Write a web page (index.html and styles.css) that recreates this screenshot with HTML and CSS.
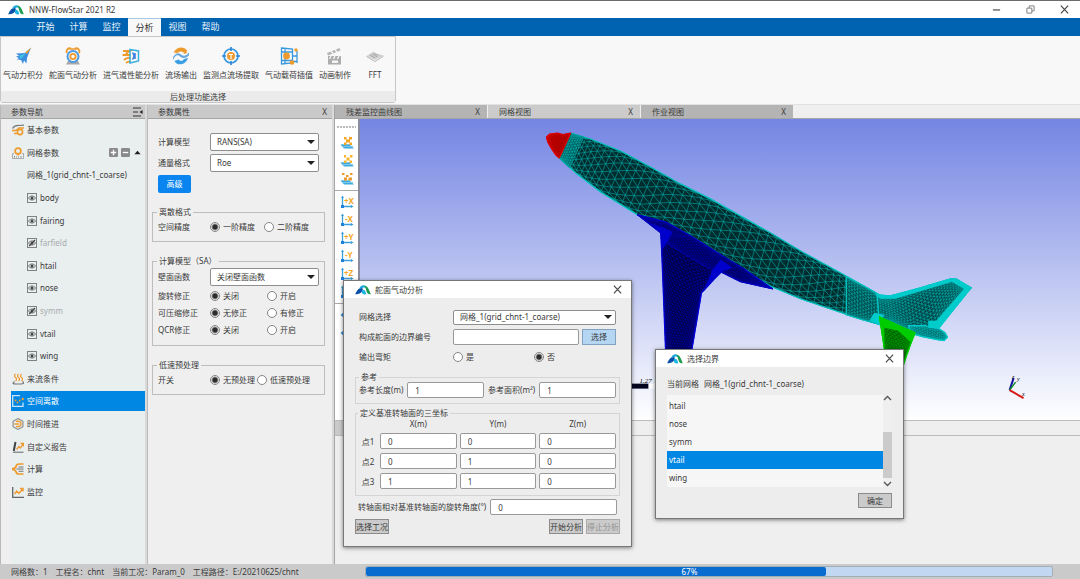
FILE: index.html
```html
<!DOCTYPE html>
<html lang="zh-CN">
<head>
<meta charset="utf-8">
<meta name="viewport" content="width=device-width, initial-scale=1">
<title>NNW-FlowStar 2021 R2</title>
<link rel="stylesheet" href="styles.css">
</head>
<body>
<svg class="defs" aria-hidden="true">
  <symbol id="logo" viewBox="0 0 16 10">
    <path d="M0.200 9.200C1.500 6 3.500 3 6.500 3c1.800 0 1.500 2 0.500 3.500C5.500 8.500 3 9.600 0.200 9.200z" fill="#0a4fa8"/>
    <path d="M4.200 3.400C5.500 1 7 0 8.700 0.200c1.500 0.300 2.300 1.800 3 3.600C10.500 2.500 9 2.300 7.500 3z" fill="#19a7e0"/>
    <path d="M7.200 5.200C8.500 4.200 10.500 5 11.300 9.300 8.600 9.800 6 8.600 7.200 5.200z" fill="#1cb5e6"/>
    <path d="M9.300 0.600C13 1 14.200 5.300 15.800 9.200c-3 0.400-3.900-1.500-4.500-3.500C10.700 3.800 10.300 2 9.300 0.600z" fill="#1c9c50"/>
  </symbol>
  <symbol id="eye" viewBox="0 0 10 10">
    <rect x="0.500" y="0.500" width="9" height="9" fill="none" stroke="#7d8283"/>
    <path d="M1.300 5Q5 0.800 8.700 5Q5 9.200 1.300 5z" fill="none" stroke="#666" stroke-width="0.900"/>
    <circle cx="5" cy="5" r="1.500" fill="#444"/>
  </symbol>
  <symbol id="eye-off" viewBox="0 0 10 10">
    <use href="#eye"/>
    <path d="M2.200 8L8 2" stroke="#444" stroke-width="1.200"/>
  </symbol>
  <symbol id="close" viewBox="0 0 10 10"><path d="M1 0.800l8 8.400M9 0.800l-8 8.400" stroke="#444" stroke-width="1.300" fill="none"/></symbol>
  <symbol id="plane-tool" viewBox="0 0 14 14">
    <path d="M0.500 8.500h9L14 12.500H4z" fill="#3fa9e0"/><path d="M1 8.500h9M3 10.500h10" stroke="#7cc8ea"/>
  </symbol>
  <symbol id="axis" viewBox="0 0 14 14">
    <path d="M2.500 12V2.500M2.500 11.500H12" stroke="#3a9fdc" stroke-width="1.300"/>
    <path d="M2.500 0.500L4 3H1zM13.500 11.500L11 13V10z" fill="#3a9fdc"/><rect x="1" y="10" width="3" height="3" fill="#1e80dd"/>
  </symbol>
</svg>

<div class="app">
  <header class="titlebar">
    <svg class="logo"><use href="#logo"/></svg>
    <h1>NNW-FlowStar 2021 R2</h1>
    <div class="win-buttons">
      <button aria-label="最小化"><svg viewBox="0 0 10 10"><path d="M1 5.500h8" stroke="#555" stroke-width="1.400"/></svg></button>
      <button aria-label="还原"><svg viewBox="0 0 10 10"><path d="M1 3.500h5.500V9H1zM3.500 3.300V1H9v5.500H6.700" fill="none" stroke="#777"/></svg></button>
      <button aria-label="关闭"><svg><use href="#close"/></svg></button>
    </div>
  </header>

  <nav class="menubar">
    <button>开始</button><button>计算</button><button>监控</button><button class="active">分析</button><button>视图</button><button>帮助</button>
  </nav>

  <section class="ribbon">
    <div class="ribbon-group">
      <div class="ribbon-items">
        <button><svg viewBox="0 0 18 18"><path d="M17 0.500L11 6 2 6.500l3 2.300-3 0.700 3 1.800-2.500 1 4.500 0.700 2 4 1-3.500 2.500 3 0.500-5.500z" fill="#3c8fe0"/><path d="M17.500 0.500L13 7l-1.800-1.500z" fill="#ee9a2d"/><path d="M5 8.800l7-2.600-5 6z" fill="#3fc0dd"/></svg>气动力积分</button>
        <button><svg viewBox="0 0 18 18"><path d="M4 14h10l2 3.500H2z" fill="#a7a7a7"/><path d="M3 6a3.200 3.200 0 0 1 4-4.500M15 6a3.200 3.200 0 0 0-4-4.500" fill="none" stroke="#ee9a2d" stroke-width="1.800"/><circle cx="9" cy="9.500" r="5.500" fill="none" stroke="#4d9be3" stroke-width="2"/><circle cx="9" cy="9.500" r="2.700" fill="none" stroke="#ee9a2d" stroke-width="1.800"/><path d="M5.500 2h7" stroke="#ee9a2d" stroke-width="1.500"/></svg>舵面气动分析</button>
        <button><svg viewBox="0 0 18 18"><path d="M1 4h7q-5 3-4 4h5M0.500 8H5M2 13q3-3 7-2M4 16q2-2 5-1" fill="none" stroke="#ee9a2d" stroke-width="1.800"/><path d="M8 2.500L16.500 4v10L8 16z" fill="none" stroke="#38b1e0" stroke-width="1.500"/><path d="M10.500 5.500q3 3.500 0 7M13 6v6" fill="none" stroke="#3b7fe0" stroke-width="1.500"/></svg>进气道性能分析</button>
        <button><svg viewBox="0 0 18 18"><path d="M1.500 5.500C5-0.500 12-1 15.500 4L12 5.800Q8 3 5.500 6z" fill="#ee9a2d"/><path d="M1 10q4-6 8-2.500t8-2v3Q12 13 8 9.500T1 13z" fill="#6aa8dc"/><path d="M16 11C14 18 5 19.500 2.500 14l4-1.500q3 3 5.500-0.500z" fill="#3b9fe4"/><path d="M13 4l2.500 2-4 1z" fill="#ee9a2d"/></svg>流场输出</button>
        <button><svg viewBox="0 0 18 18"><circle cx="9" cy="9" r="7" fill="none" stroke="#3998dd" stroke-width="1.700"/><path d="M9 0v4M9 14v4M0 9h4M14 9h4" stroke="#2f89d8" stroke-width="1.700"/><circle cx="9" cy="9" r="4" fill="#ee9a2d"/><path d="M7 7.500h4M9 7.500V12" stroke="#fff" stroke-width="1.200"/></svg>监测点流场提取</button>
        <button><svg viewBox="0 0 18 18"><path d="M1.500 1l11 1v14l-11 1zM17 4v12M12.500 9H17M12.500 14.500H17M1.500 5h11M1.500 13.500h11M5 1.500v15.500" fill="none" stroke="#3998dd" stroke-width="1.300"/><circle cx="6.500" cy="9" r="3.400" fill="#ee9a2d"/><circle cx="12" cy="15.500" r="2.300" fill="#ee9a2d"/><circle cx="16" cy="3" r="1.700" fill="#ee9a2d"/></svg>气动载荷插值</button>
        <button><svg viewBox="0 0 18 18"><path d="M2 9h13v8.500H2z" fill="#adadad"/><path d="M1 6l12.500-5 1 2.500L2 8.500z" fill="#b5b5b5"/><path d="M5 4l2 2.500M9 2.500L11 5M5 9l-1.500 3M9 9l-1.500 3M13 9l-1.500 3" stroke="#f8f8f8" stroke-width="1.300"/><path d="M6 13.500h6V16H6z" fill="#f4f4f4"/></svg>动画制作</button>
        <button class="wide"><svg viewBox="0 0 18 18"><path d="M0.500 9L7.500 4.500l1.500 1.500L17.500 8.500 9 13z" fill="#d2d2d2"/><path d="M4 8l5 3M6 6.800l5 3M8 6l4.500 2.800" stroke="#9a9a9a" stroke-width="0.800"/><path d="M0.500 9.500L9 14.500l8.500-5.500" fill="none" stroke="#b4b4b4"/></svg>FFT</button>
      </div>
      <div class="ribbon-caption">后处理功能选择</div>
    </div>
  </section>

  <main class="workspace">
    <aside class="panel nav-panel">
      <header class="panel-head">参数导航
        <button aria-label="折叠"><svg viewBox="0 0 10 10"><path d="M0 1h8M0 5h5M0 9h8" stroke="#333" stroke-width="1.100"/><path d="M9.500 3v4L6.500 5z" fill="#222"/></svg></button>
      </header>
      <ul class="nav-list">
        <li><button><svg viewBox="0 0 12 12"><path d="M0.500 4.500Q3 1 7 1.500L12 1.200" fill="none" stroke="#777" stroke-width="1.200"/><path d="M0 6.500h4L7 4h5M2 9.500h3" fill="none" stroke="#ee9a2d" stroke-width="1.400"/><circle cx="8" cy="8" r="2.600" fill="none" stroke="#ee9a2d" stroke-width="1.600"/></svg>基本参数</button></li>
        <li><button><svg viewBox="0 0 12 12"><path d="M2 6.500H0.500v5h11v-5H10" fill="none" stroke="#aaa"/><path d="M2.500 9v1.500M4.500 9.500v1M6.500 9.500v1M9 9v1.500" stroke="#888"/><circle cx="6" cy="4" r="2.900" fill="none" stroke="#ee9a2d" stroke-width="1.700"/><path d="M4.500 7l1.500 2L7.500 7" fill="#ee9a2d"/></svg>网格参数</button>
          <span class="row-tools">
            <button class="tool" aria-label="添加"><svg viewBox="0 0 10 10"><rect width="10" height="10" rx="1.500" fill="#8a8a8a"/><path d="M5 2v6M2 5h6" stroke="#fff" stroke-width="1.500"/></svg></button>
            <button class="tool" aria-label="删除"><svg viewBox="0 0 10 10"><rect width="10" height="10" rx="1.500" fill="#8a8a8a"/><path d="M2 5h6" stroke="#fff" stroke-width="1.500"/></svg></button>
            <button class="tool" aria-label="收起"><svg viewBox="0 0 10 10"><path d="M1.500 7L5 3l3.500 4z" fill="#222"/></svg></button>
          </span></li>
        <li class="sub"><button>网格_1(grid_chnt-1_coarse)</button></li>
        <li class="sub"><button><svg><use href="#eye"/></svg>body</button></li>
        <li class="sub"><button><svg><use href="#eye"/></svg>fairing</button></li>
        <li class="sub off"><button><svg><use href="#eye-off"/></svg>farfield</button></li>
        <li class="sub"><button><svg><use href="#eye"/></svg>htail</button></li>
        <li class="sub"><button><svg><use href="#eye"/></svg>nose</button></li>
        <li class="sub off"><button><svg><use href="#eye-off"/></svg>symm</button></li>
        <li class="sub"><button><svg><use href="#eye"/></svg>vtail</button></li>
        <li class="sub"><button><svg><use href="#eye"/></svg>wing</button></li>
        <li><button><svg viewBox="0 0 12 12"><path d="M3.500 1q-2 2 0 3.500t0 3.500M6.500 1q-2 2 0 3.500t0 3.500M9.500 1q-2 2 0 3.500t0 3.500" fill="none" stroke="#ee9a2d" stroke-width="1.200"/><path d="M2.500 8.500Q-1 11 4 11h5q4.500 0 1.500-2.500" fill="none" stroke="#777" stroke-width="1.200"/></svg>来流条件</button></li>
        <li class="selected"><button><svg viewBox="0 0 12 12"><path d="M11 7.500v3.800H0.700V0.700H8" fill="none" stroke="#c9e4fa" stroke-width="1.300"/><circle cx="3.500" cy="5.500" r="0.900" fill="#ee9a2d"/><circle cx="5.500" cy="7.500" r="0.900" fill="#ee9a2d"/><circle cx="7.800" cy="5.500" r="0.900" fill="#ee9a2d"/><circle cx="10.800" cy="4" r="1.200" fill="#ee9a2d"/></svg>空间离散</button></li>
        <li><button><svg viewBox="0 0 12 12"><path d="M6 0.600l4.900 2.700v5.400L6 11.400 1.100 8.700V3.300z" fill="none" stroke="#888" stroke-width="1.100"/><path d="M4 3.500Q9 2.500 9 5.800T4 8.500M2.500 6H7" fill="none" stroke="#ee9a2d" stroke-width="1.400"/></svg>时间推进</button></li>
        <li><button><svg viewBox="0 0 12 12"><path d="M3.500 1L1.800 10" stroke="#444" stroke-width="2"/><path d="M1 11.200h10.500" stroke="#666"/><path d="M4.500 8.500l2.500-3 1.500 1.500L11 3M8.500 2.500H11.500V5.500" fill="none" stroke="#ee9a2d" stroke-width="1.300"/></svg>自定义报告</button></li>
        <li><button><svg viewBox="0 0 12 12"><path d="M11.500 1H7Q4.500 1 4 3.500T0 5.500M0 6.500q3.500 0 4 2.300T7 11h4.500" fill="none" stroke="#ee9a2d" stroke-width="1.700"/><path d="M4.500 6H11.500M6.500 4h5M6.500 8.300h5" stroke="#777" stroke-width="1.100"/></svg>计算</button></li>
        <li><button><svg viewBox="0 0 12 12"><path d="M0.700 1v10.300H12" fill="none" stroke="#666" stroke-width="1.300"/><path d="M2.500 8l2.200-3 2.200 2.500L10.500 3M8 2.500h3V5.500" fill="none" stroke="#ee9a2d" stroke-width="1.400"/></svg>监控</button></li>
      </ul>
    </aside>

    <section class="panel prop-panel">
      <header class="panel-head">参数属性 <button aria-label="关闭面板">X</button></header>
      <form class="props">
        <div class="field"><label for="model">计算模型</label><span class="combo"><select id="model"><option>RANS(SA)</option></select></span></div>
        <div class="field"><label for="flux">通量格式</label><span class="combo"><select id="flux"><option>Roe</option></select></span></div>
        <button type="button" class="primary">高级</button>
        <fieldset>
          <legend>离散格式</legend>
          <div class="field"><span>空间精度</span><label class="radio"><input type="radio" name="order" checked>一阶精度</label><label class="radio"><input type="radio" name="order">二阶精度</label></div>
        </fieldset>
        <fieldset class="roomy">
          <legend>计算模型（SA）</legend>
          <div class="field"><label for="wall">壁面函数</label><span class="combo"><select id="wall"><option>关闭壁面函数</option></select></span></div>
          <div class="field"><span>旋转修正</span><label class="radio"><input type="radio" name="rot" checked>关闭</label><label class="radio"><input type="radio" name="rot">开启</label></div>
          <div class="field"><span>可压缩修正</span><label class="radio"><input type="radio" name="comp" checked>无修正</label><label class="radio"><input type="radio" name="comp">有修正</label></div>
          <div class="field"><span>QCR修正</span><label class="radio"><input type="radio" name="qcr" checked>关闭</label><label class="radio"><input type="radio" name="qcr">开启</label></div>
        </fieldset>
        <fieldset class="tight">
          <legend>低速预处理</legend>
          <div class="field"><span>开关</span><label class="radio"><input type="radio" name="pre" checked>无预处理</label><label class="radio"><input type="radio" name="pre">低速预处理</label></div>
        </fieldset>
      </form>
    </section>

    <section class="views">
      <div class="tabs">
        <div class="tab"><span>残差监控曲线图</span><button aria-label="关闭">X</button></div>
        <div class="tab active"><span>网格视图</span><button aria-label="关闭">X</button></div>
        <div class="tab"><span>作业视图</span><button aria-label="关闭">X</button></div>
      </div>
      <div class="stage">
        <div class="toolstrip">
          <span class="grip"></span>
          <button aria-label="视图一"><svg viewBox="0 0 14 14"><use href="#plane-tool"/><path d="M4 1h2.500v2.500H4zM9 1h3v2.500H9zM6 3.500h4v3H6zM4 6.500h2.500V9H4zM9.500 6.500h2.500V9H9.500z" fill="#f5a623"/></svg></button>
          <button aria-label="视图二"><svg viewBox="0 0 14 14"><use href="#plane-tool"/><path d="M4 1h2v2.500H4zM10 1h2.500v2.500H10zM6.500 3.500h3v3h-3zM4 6.500h2.500V9H4zM9.500 6.500h2.500V9H9.500z" fill="#f7b52e"/></svg></button>
          <button aria-label="视图三"><svg viewBox="0 0 14 14"><use href="#plane-tool"/><path d="M2 1h2.500v2H2zM6 3h2.500v2H6zM10 1h2.500v2H10zM4 5.500h3v3H4zM8.500 5.500H12v3H8.500z" fill="#ee9a2d"/></svg></button>
          <hr>
          <button aria-label="+X"><svg viewBox="0 0 14 14"><use href="#axis"/><text x="4" y="9">+X</text></svg></button>
          <button aria-label="-X"><svg viewBox="0 0 14 14"><use href="#axis"/><text x="5" y="9">-X</text></svg></button>
          <button aria-label="+Y"><svg viewBox="0 0 14 14"><use href="#axis"/><text x="4" y="9">+Y</text></svg></button>
          <button aria-label="-Y"><svg viewBox="0 0 14 14"><use href="#axis"/><text x="5" y="9">-Y</text></svg></button>
          <button aria-label="+Z"><svg viewBox="0 0 14 14"><use href="#axis"/><text x="4" y="9">+Z</text></svg></button>
          <button aria-label="-Z"><svg viewBox="0 0 14 14"><use href="#axis"/><text x="5" y="9">-Z</text></svg></button>
          <hr>
          <button aria-label="左转"><svg viewBox="0 0 14 14"><path d="M0.500 7L5 3v8z" fill="#3a8fdc"/><path d="M5 5q5-3 8 2" fill="none" stroke="#ee9a2d" stroke-width="2"/></svg></button>
          <button aria-label="右转"><svg viewBox="0 0 14 14"><path d="M0.500 7L5 3v8z" fill="#3a8fdc"/><path d="M5 9q5 3 8-2" fill="none" stroke="#ee9a2d" stroke-width="2"/></svg></button>
        </div>
        <div class="viewport">
          <svg id="scene" viewBox="359 119 721 301" preserveAspectRatio="xMinYMin meet" role="img" aria-label="飞机表面网格">
            <g id="aircraft"></g>
            <path d="M630 386.500h18" stroke="#050520" stroke-width="5"/>
            <path d="M648 386.500h8" stroke="#fff" stroke-width="5"/>
            <text class="scale-text" x="639" y="383">1.27</text>
            <path d="M1009.500 390.500l4-12" stroke="#1010a0" stroke-width="2"/>
            <path d="M1009.500 390.500l6-8" stroke="#109020" stroke-width="1.500"/>
            <path d="M1009.500 390.500l14 8" stroke="#d81818" stroke-width="2"/>
            <text class="axis-text" x="1012" y="379">z</text><text class="axis-text" x="1017" y="381">y</text><text class="axis-text" x="1022" y="396">x</text>
          </svg>
        </div>
      </div>
      <div class="lower-tabs"><span></span></div>
      <div class="lower"></div>
    </section>
  </main>

  <footer class="statusbar">
    <div class="status-text"><span>网格数：1</span><span>工程名：chnt</span><span>当前工况：Param_0</span><span>工程路径：E:/20210625/chnt</span></div>
    <div class="progress" role="progressbar" aria-valuenow="67" aria-valuemin="0" aria-valuemax="100"><div class="bar" style="width:67%"></div><span>67%</span></div>
  </footer>

  <div class="dialog rudder" role="dialog" aria-labelledby="d1">
    <header class="dialog-head"><svg class="logo"><use href="#logo"/></svg><h2 id="d1">舵面气动分析</h2><button aria-label="关闭"><svg><use href="#close"/></svg></button></header>
    <form class="rudder-form">
      <div class="drow"><label for="grid">网格选择</label><span class="combo"><select id="grid"><option>网格_1(grid_chnt-1_coarse)</option></select></span></div>
      <div class="drow"><label for="bnd">构成舵面的边界编号</label><input type="text" id="bnd"><button type="button" class="pick">选择</button></div>
      <div class="drow"><span class="lab">输出弯矩</span><label class="radio"><input type="radio" name="moment">是</label><label class="radio"><input type="radio" name="moment" checked>否</label></div>
      <fieldset class="ref">
        <legend>参考</legend>
        <div><label for="len">参考长度(m)</label><input type="text" id="len" value="1"><label for="area">参考面积(m²)</label><input type="text" id="area" value="1"></div>
      </fieldset>
      <fieldset class="pts">
        <legend>定义基准转轴面的三坐标</legend>
        <table>
          <tr><td></td><th>X(m)</th><th>Y(m)</th><th>Z(m)</th></tr>
          <tr><th>点1</th><td><input type="text" aria-label="点1 X" value="0"></td><td><input type="text" aria-label="点1 Y" value="0"></td><td><input type="text" aria-label="点1 Z" value="0"></td></tr>
          <tr><th>点2</th><td><input type="text" aria-label="点2 X" value="0"></td><td><input type="text" aria-label="点2 Y" value="1"></td><td><input type="text" aria-label="点2 Z" value="0"></td></tr>
          <tr><th>点3</th><td><input type="text" aria-label="点3 X" value="1"></td><td><input type="text" aria-label="点3 Y" value="1"></td><td><input type="text" aria-label="点3 Z" value="0"></td></tr>
        </table>
      </fieldset>
      <div class="angle"><label for="ang">转轴面相对基准转轴面的旋转角度(°)</label><input type="text" id="ang" value="0"></div>
      <div class="actions"><button type="button" class="btn">选择工况</button><button type="button" class="btn push">开始分析</button><button type="button" class="btn" disabled>停止分析</button></div>
    </form>
  </div>

  <div class="dialog boundary" role="dialog" aria-labelledby="d2">
    <header class="dialog-head"><svg class="logo"><use href="#logo"/></svg><h2 id="d2">选择边界</h2><button aria-label="关闭"><svg><use href="#close"/></svg></button></header>
    <div class="boundary-body">
      <p><span>当前网格</span><span>网格_1(grid_chnt-1_coarse)</span></p>
      <div class="listbox">
        <ul role="listbox" aria-label="边界"><li role="option">htail</li><li role="option">nose</li><li role="option">symm</li><li role="option" class="selected" aria-selected="true">vtail</li><li role="option">wing</li></ul>
        <div class="scroll">
          <svg viewBox="0 0 9 6"><path d="M1 5l3.500-3.500L8 5" fill="none" stroke="#555" stroke-width="1.300"/></svg>
          <div class="track"><div class="thumb"></div></div>
          <svg viewBox="0 0 9 6"><path d="M1 1l3.500 3.500L8 1" fill="none" stroke="#555" stroke-width="1.300"/></svg>
        </div>
      </div>
      <button class="btn ok">确定</button>
    </div>
  </div>
</div>
<script src="mesh.js"></script>
</body>
</html>
```
FILE: styles.css
```css
* { box-sizing: border-box; }
body {
  margin: 0;
  font: 8px/12px "Noto Sans", "Noto Sans CJK SC", sans-serif;
  color: #3a3a3a;
  background: #efefef;
}
button, input, select { font: inherit; color: inherit; margin: 0; padding: 0; }
button { border: 0; background: none; white-space: nowrap; }
h1, h2, p, ul { margin: 0; padding: 0; font: inherit; list-style: none; }
svg { display: block; flex: none; }
.defs { position: absolute; width: 0; height: 0; }

.app { position: relative; display: flex; flex-direction: column; height: 100vh; overflow: hidden; }

/* Title bar and menu */
.titlebar { display: flex; align-items: center; height: 18px; padding: 0 6px 0 8px; background: #fff; border-top: 1px solid #6b6b6b; }
.logo { width: 16px; height: 10px; }
.titlebar h1 { margin-left: 5px; }
.win-buttons { display: flex; margin-left: auto; gap: 14px; }
.win-buttons button { width: 20px; display: flex; justify-content: center; }
.win-buttons svg { width: 9px; height: 9px; }
.menubar { display: flex; height: 18px; padding-left: 29px; background: #0063b1; font-size: 9px; }
.menubar button { width: 33px; color: #e8f2fb; }
.menubar .active { background: #f8f8f8; color: #333; border-top: 1px solid #a9c9e6; }

/* Ribbon */
.ribbon { height: 69px; background: #f8f8f8; border-bottom: 1px solid #e2e2e2; flex: none; }
.ribbon-group { display: flex; flex-direction: column; width: 396px; height: 67px; border: 1px solid #c6c6c6; border-radius: 0 0 3px 3px; }
.ribbon-items { display: flex; flex: 1; gap: 6px; padding: 10px 2px 0; }
.ribbon-items button { display: flex; flex-direction: column; align-items: center; gap: 4px; height: 35px; }
.ribbon-items .wide { width: 36px; }
.ribbon-items svg { width: 18px; height: 18px; }
.ribbon-caption { height: 11px; line-height: 11px; text-align: center; background: #ebebeb; }

/* Workspace */
.workspace { display: flex; flex: 1; min-height: 0; background: #dadada; gap: 2px; }
.panel { display: flex; flex-direction: column; background: #efefef; border-left: 1px solid #b9b9b9; }
.nav-panel { width: 145px; }
.prop-panel { width: 185px; }
.panel-head { display: flex; flex: none; align-items: center; justify-content: space-between; height: 14px; padding: 0 5px 0 10px; background: #c9c9c9; border-bottom: 1px solid #a5a5a5; }
.nav-panel .panel-head { padding-right: 2px; }
.panel-head svg { width: 10px; height: 10px; }
.nav-list { display: flex; flex: 1; flex-direction: column; margin-left: 10px; padding-bottom: 61px; background: #e9eeef; }
.nav-list li { display: flex; flex: 1; align-items: center; }
.nav-list li > button { display: flex; flex: 1; align-items: center; gap: 3px; height: 20px; padding-left: 1px; }
.nav-list .sub > button { padding-left: 16px; }
.nav-list svg { width: 12px; height: 12px; }
.nav-list .sub svg { width: 10px; height: 10px; }
.nav-list .off { color: #a8acad; }
.nav-list .selected > button { background: #0087e4; color: #fff; }
.row-tools { display: flex; gap: 3px; padding-right: 3px; }
.row-tools svg { width: 9px; height: 9px; }

/* Property form */
.props { display: flex; flex-direction: column; gap: 3px; padding: 14px 7px 0 4px; }
.props .field { display: flex; align-items: center; padding-left: 6px; min-height: 14px; }
.props .field > :first-child { width: 52px; flex: none; }
.props .combo { width: 109px; height: 18px; }
.props > .primary { align-self: flex-start; margin-left: 6px; width: 33px; height: 18px; border-radius: 2px; background: #0a84ef; color: #fff; }
fieldset { min-width: 0; margin: 0; padding: 0; border: 1px solid #bdbdbd; }
legend { padding: 0 2px; line-height: 10px; }
.props fieldset { margin-top: 11px; padding: 3px 0 7px; }
.props fieldset legend { margin-left: 4px; }
.props fieldset .field { padding-left: 5px; }
.props fieldset .radio:nth-child(2) { width: 54px; }
.props .roomy { padding: 2px 0 5px; }
.props .roomy .field { margin-bottom: 3px; }
.props .roomy .radio:nth-child(2) { width: 57px; }
.props .tight .radio:nth-child(2) { width: 47px; }

.combo { position: relative; display: block; }
.combo::after { content: ""; position: absolute; right: 4px; top: 50%; margin-top: -2px; border: 4px solid transparent; border-top-color: #222; border-bottom: 0; pointer-events: none; }
select { appearance: none; display: block; width: 100%; height: 100%; padding: 0 6px; border: 1px solid #8e8e8e; border-radius: 2px; background: #fff; }
input[type="text"] { min-width: 0; width: 100%; height: 16px; padding: 0 7px; border: 1px solid #999; border-radius: 2px; background: #fff; }
input[type="radio"] { appearance: none; flex: none; width: 10px; height: 10px; border: 1px solid #858585; border-radius: 50%; background: #fff; }
input[type="radio"]:checked { background: radial-gradient(circle, #2c2c2c 0 2px, #fff 4px); }
.radio { display: flex; flex: none; align-items: center; gap: 3px; white-space: nowrap; }

/* Views */
.views { display: flex; flex: 1; flex-direction: column; min-width: 0; background: #efefef; border-left: 1px solid #a5a5a5; }
.tabs { display: flex; flex: none; height: 14px; border-bottom: 1px solid #a5a5a5; }
.tab { display: flex; align-items: center; justify-content: space-between; width: 153px; padding: 0 7px 0 11px; background: #b4b4b4; border-right: 1px solid #efefef; }
.tab.active { background: #cbcbcb; }
.stage { display: flex; flex: 302; min-height: 0; border-bottom: 1px solid #bbb; }
.toolstrip { display: flex; flex: none; flex-direction: column; align-items: center; gap: 4px; width: 25px; padding-top: 7px; overflow: hidden; background: #fff; border-right: 2px solid #8c8ca0; }
.toolstrip .grip { width: 19px; height: 2px; margin-bottom: 4px; background: repeating-linear-gradient(90deg, #bbb 0 2px, #fff 2px 3px); }
.toolstrip svg { width: 14px; height: 14px; }
.toolstrip text { font: bold 8px "Noto Sans", sans-serif; fill: #f5a623; }
.toolstrip hr { width: 100%; margin: 0; border: 0; border-top: 1px solid #aaa; }
.viewport { flex: 1; min-width: 0; background: linear-gradient(#7485e3, #fff); }
#scene { width: 100%; height: 100%; }
.scale-text { font: italic 7px "Liberation Serif", serif; }
.axis-text { font: italic 6px "Liberation Serif", serif; }
.lower-tabs { flex: none; height: 15px; border-bottom: 1px solid #bbb; }
.lower-tabs span { display: block; width: 153px; height: 14px; background: #cbcbcb; }
.lower { flex: 128; }

/* Status bar */
.statusbar { display: flex; flex: none; align-items: center; height: 15px; padding: 0 27px 0 11px; background: #cacaca; }
.status-text { display: flex; gap: 8px; width: 354px; flex: none; white-space: nowrap; }
.progress { position: relative; flex: 1; height: 11px; border: 1px solid #a5adb5; border-radius: 2px; background: #c1d7f2; }
.progress .bar { height: 100%; border-radius: 2px; background: #0a6cce; }
.progress span { position: absolute; top: 0; left: 46%; line-height: 9px; color: #fff; }

/* Dialogs float over the workspace */
.dialog { position: absolute; background: #ededed; border: 1px solid #777; box-shadow: 0 1px 4px rgba(0, 0, 0, .5); }
.rudder { left: 343px; top: 280px; width: 289px; }
.boundary { left: 655px; top: 349px; width: 249px; }
.dialog-head { display: flex; align-items: center; height: 17px; padding: 0 9px 0 11px; background: #fff; }
.dialog-head h2 { margin-left: 4px; }
.dialog-head button { margin-left: auto; }
.dialog-head button svg { width: 9px; height: 9px; }
.btn { height: 15px; border: 1px solid #8b8b8b; background: #cbcbcb; width: 34px; line-height: 12px; }
.btn:disabled { color: #909090; border-color: #aaa; }

.rudder-form { display: flex; flex-direction: column; padding: 11px 11px 12px; }
.drow { display: flex; align-items: center; gap: 3px; height: 16px; margin: 0 4px 4px; }
.drow > :first-child { width: 91px; flex: none; }
.drow .combo { flex: 1; height: 15px; }
.drow .radio { width: 78px; }
.drow .pick { flex: none; width: 34px; height: 16px; background: #b4d6f2; border: 1px solid #7fa3c0; }
.rudder fieldset { border-color: #d4d4d4; }
.ref { margin-top: 3px; padding: 0 3px 5px; }
.ref legend { margin-left: 0; }
.ref div { display: flex; align-items: center; gap: 4px; }
.ref label { flex: none; }
.pts { margin-top: 4px; padding: 0 0 2px; }
.pts legend { margin-left: 2px; }
.pts table { width: 100%; border-spacing: 3px 4px; margin-top: -4px; }
.pts th { font-weight: normal; padding: 0; line-height: 11px; }
.pts td { padding: 0; }
.pts tr > :first-child { width: 18px; }
.pts input { display: block; }
.angle { display: flex; align-items: center; gap: 4px; margin: 3px 3px 4px; }
.angle label { flex: none; }
.actions { display: flex; gap: 3px; }
.actions .push { margin-left: auto; }

.boundary-body { display: flex; flex-direction: column; padding: 11px 11px 10px; }
.boundary-body p { display: flex; gap: 5px; margin-bottom: 5px; }
.listbox { display: flex; background: #f6f6f6; }
.listbox ul { flex: 1; padding-top: 2px; }
.listbox li { height: 18px; line-height: 18px; padding-left: 2px; }
.listbox .selected { background: #0087e4; color: #fff; }
.scroll { display: flex; flex-direction: column; align-items: center; width: 9px; background: #efefef; }
.scroll svg { width: 9px; height: 6px; }
.track { display: flex; flex: 1; flex-direction: column; justify-content: flex-end; width: 100%; padding-bottom: 3px; }
.thumb { height: 46px; background: #cbcbcb; }
.ok { align-self: flex-end; margin-top: 6px; }
```
FILE: mesh.js
```js
// Builds the triangulated surface patches of the aircraft as SVG paths.
(function () {
  var root = document.getElementById('aircraft');
  var NS = 'http://www.w3.org/2000/svg';

  function along(line, s) {
    var lens = [], total = 0, k;
    for (k = 1; k < line.length; k++) {
      lens[k] = Math.hypot(line[k][0] - line[k - 1][0], line[k][1] - line[k - 1][1]);
      total += lens[k];
    }
    var d = s * total;
    for (k = 1; k < line.length - 1 && d > lens[k]; k++) d -= lens[k];
    var f = lens[k] ? d / lens[k] : 0;
    return [line[k - 1][0] + (line[k][0] - line[k - 1][0]) * f, line[k - 1][1] + (line[k][1] - line[k - 1][1]) * f];
  }

  function draw(d, attrs) {
    var p = document.createElementNS(NS, 'path');
    p.setAttribute('d', d);
    for (var key in attrs) p.setAttribute(key, attrs[key]);
    root.appendChild(p);
  }

  // a, b: opposite edges of the patch; ease: crowding of cells towards the ends
  function patch(a, b, cols, rows, ease, fill, line, edge, width) {
    function pt(i, j) {
      var u = i / cols, s = u + ease * (u * u * (3 - 2 * u) - u);
      var t = Math.min(1, Math.max(0, (j + (i % 2 ? 0.5 : 0)) / rows));
      t = t + 0.7 * ((1 - Math.cos(Math.PI * t)) / 2 - t);
      var p = along(a, s), q = along(b, s);
      return (p[0] + (q[0] - p[0]) * t).toFixed(1) + ' ' + (p[1] + (q[1] - p[1]) * t).toFixed(1);
    }
    var d = '';
    for (var i = 0; i <= cols; i++) {
      d += 'M' + pt(i, 0) + 'L' + pt(i, rows);
      if (i === cols) break;
      for (var j = 0; j <= rows; j++) {
        d += 'M' + pt(i, j) + 'L' + pt(i + 1, j);
        if (i % 2) { if (j < rows) d += 'M' + pt(i, j) + 'L' + pt(i + 1, j + 1); }
        else if (j > 0) d += 'M' + pt(i, j) + 'L' + pt(i + 1, j - 1);
      }
    }
    var outline = 'M' + a.concat(b.slice().reverse()).join('L') + 'Z';
    if (fill !== 'none') draw(outline, { fill: fill });
    draw(d, { fill: 'none', stroke: line, 'stroke-width': width });
    if (edge !== 'none') draw(outline, { fill: 'none', stroke: edge, 'stroke-width': 1.2, 'stroke-linejoin': 'round' });
  }

  // fuselage
  patch(
    [[570, 133], [590, 139], [620, 151], [650, 167], [680, 184], [710, 199], [740, 216], [770, 233], [800, 251], [840, 273], [865, 287], [879, 295]],
    [[558.5, 158], [575, 173], [600, 192], [637, 215], [665, 224], [690, 238], [722, 257], [745, 271], [769, 286], [800, 299], [850, 316], [880, 325]],
    50, 7, 0.75, '#002c2e', '#00aaa6', '#00c4c0', 0.6);
  // refined bands at the nose joint and ahead of the tail
  patch([[570, 133], [583, 137]], [[558.5, 158], [569, 168]], 6, 13, 0, '#004446', '#00b0ac', 'none', 0.6);
  patch([[846, 277], [865, 287], [879, 295]], [[846, 315], [862, 320], [880, 325]], 12, 12, 0, '#003a3c', '#00a8a4', '#00c4c0', 0.6);
  // horizontal tail and tail cone
  patch(
    [[877, 295], [890, 296], [920, 288], [950, 279], [956, 279], [971, 288]],
    [[879, 325], [890, 322], [914, 333], [930, 331], [938, 329], [971, 288]],
    34, 16, 0.2, '#003638', '#00aaa8', '#00cccc', 0.6);
  patch([[908, 326], [925, 326], [939, 329], [945, 333], [947, 337]],
    [[912, 334], [922, 337], [937, 340], [944, 341], [947, 338]],
    16, 6, 0, '#005254', '#00b4b2', '#00cccc', 0.6);
  draw('M948 280L956 279L971 288L939 329L928 328L928 321L936 321L964 289Z', { fill: '#00cccc' });
  draw('M874 294L890 296L950 279L952 282L895 299L880 299Z', { fill: '#00cccc' });
  draw('M869 321L874 313L884 315L880 325Z', { fill: '#00cccc' });
  // nose cone
  patch([[546, 137], [549, 134], [557, 133], [562, 134.5], [570, 133]],
    [[546, 137], [547, 142], [551, 149], [555, 155], [558.5, 158]],
    14, 10, 0, '#7c0000', '#d00000', '#e00000', 0.6);
  // wing and fairing
  patch([[637, 215], [665, 222], [690, 236], [722, 256], [745, 270], [772, 289]],
    [[637, 215], [660, 233], [690, 255], [720, 272], [740, 282], [772, 289]],
    50, 8, 0.3, '#000044', '#0000b4', '#0000c4', 0.5);
  patch([[660, 232], [661, 250], [663, 300], [665, 352]],
    [[722, 270], [715, 277], [701, 293], [691, 352]],
    40, 14, 0, '#000030', '#0000b0', '#0000dd', 0.5);
  // hides the seam between fairing and wing root
  patch([[660, 231], [690, 237], [726, 262]], [[661, 240], [686, 256], [718, 274]], 26, 8, 0, '#000044', '#0000b0', 'none', 0.5);
  draw('M650 224L663 228L672 232L668 240L662 250L660 233Z', { fill: '#0000cc' });
  draw('M702 293L712 270L720 260L732 268L722 272L714 280Z', { fill: '#0000cc' });
  // vertical tail
  patch([[879, 317], [882, 335], [884, 350], [887, 366]],
    [[915, 333], [911, 343], [907, 354], [903, 366]],
    20, 10, 0, '#004c00', '#00b400', '#00d400', 0.5);
  draw('M879 317L915 333L911 343L898 331L884 328L884 350L881 333Z', { fill: '#00cc00' });
})();
```
